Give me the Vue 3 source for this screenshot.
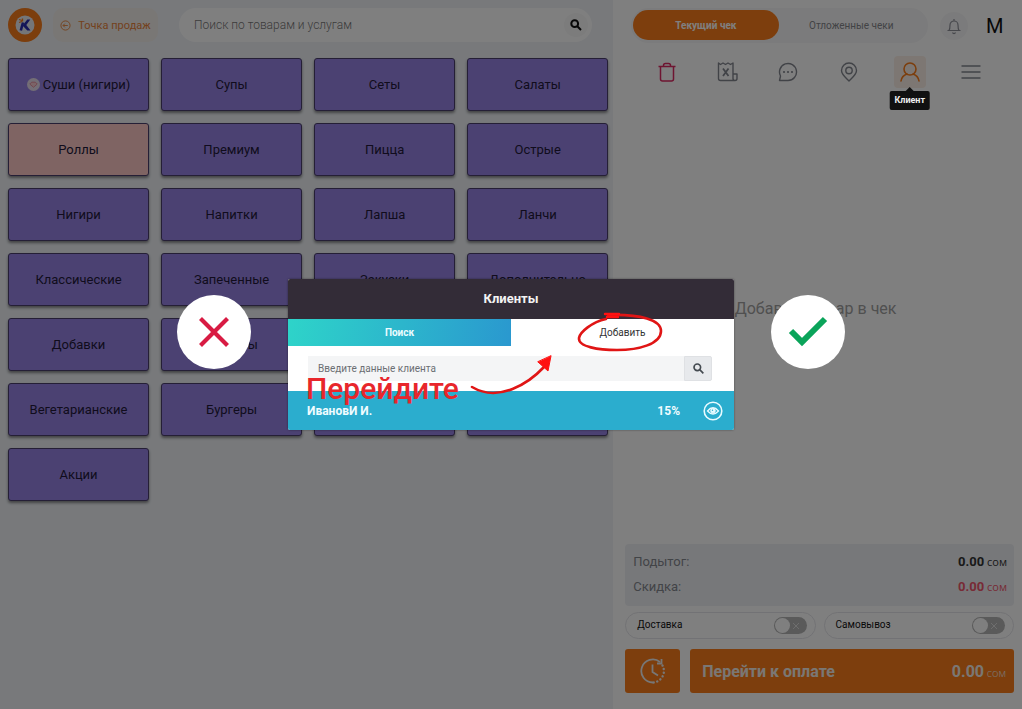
<script setup>
import { ref } from 'vue'

const categories = [
  'Суши (нигири)', 'Супы', 'Сеты', 'Салаты',
  'Роллы', 'Премиум', 'Пицца', 'Острые',
  'Нигири', 'Напитки', 'Лапша', 'Ланчи',
  'Классические', 'Запеченные', 'Закуски', 'Дополнительно',
  'Добавки', 'Гарниры', 'Десерты', 'Детское',
  'Вегетарианские', 'Бургеры', 'Блины', 'Бизнес',
  'Акции',
]
const query = ref('')
const client = ref('')
const delivery = ref(false)
const pickup = ref(false)
</script>

<template>
  <div class="page">
    <main class="catalog">
      <header class="topbar">
        <a class="logo" href="#" aria-label="Главная">
          <svg viewBox="0 0 34 34" width="34" height="34">
            <circle cx="17" cy="17" r="17" fill="#f87c1b" />
            <circle cx="17" cy="17" r="9.500" fill="#e9ecf2" />
            <path d="M15 14.500 12.800 22.500" fill="none" stroke="#2a2bb0" stroke-width="2.600" />
            <path d="M22.300 11.500h-3L14.500 17.500l4.800 5h3.200l-4.200-5.500z" fill="#2a2bb0" />
            <path d="M11 11.500l3 1M11 14.500l3-1M14.500 10.500v3" stroke="#f87c1b" stroke-width="1.300" />
          </svg>
        </a>
        <button class="point" type="button">
          <svg viewBox="0 0 12 12" width="11" height="11" fill="none" stroke="currentColor">
            <circle cx="6" cy="6" r="5" />
            <path d="M8.500 6h-5M5.300 4 3.300 6l2 2" />
          </svg>
          Точка продаж
        </button>
        <form class="search" @submit.prevent>
          <input v-model="query" type="text" placeholder="Поиск по товарам и услугам" aria-label="Поиск по товарам и услугам">
          <button type="submit" aria-label="Найти">
            <svg viewBox="0 0 12 12" width="12" height="12" fill="none" stroke="#111" stroke-width="2">
              <circle cx="4.700" cy="4.700" r="3.400" />
              <path d="M7.300 7.300 11 11" />
            </svg>
          </button>
        </form>
      </header>
      <div class="grid">
        <button v-for="(name, i) in categories" :key="name" type="button" class="tile" :class="{ picked: name === 'Роллы' }">
          <svg v-if="i === 0" viewBox="0 0 14 14" width="13" height="13">
            <circle cx="7" cy="7" r="7" fill="#e6dcec" />
            <path d="M3 6.500 5 4.500h4l2 2-4 3.500z" fill="#f6c9cf" stroke="#e58a9b" />
          </svg>
          {{ name }}
        </button>
      </div>
    </main>

    <aside class="receipt">
      <header class="receipt-top">
        <div class="tabs">
          <button type="button" class="on">Текущий чек</button>
          <button type="button">Отложенные чеки</button>
        </div>
        <button class="bell" type="button" aria-label="Уведомления">
          <svg viewBox="0 0 16 18" width="16" height="18" fill="none" stroke="#8e9099" stroke-width="1.200">
            <path d="M1.500 13.500h13M3 13.500c1-1.500 1-3 1-5.500a4 4 0 0 1 8 0c0 2.500 0 4 1 5.500M8 4V2M6.500 15.500a1.600 1.600 0 0 0 3 0" />
          </svg>
        </button>
        <span class="user">M</span>
      </header>

      <nav class="tools">
        <button type="button" aria-label="Удалить">
          <svg viewBox="0 0 20 20" width="20" height="20" fill="none" stroke="#dc2a63" stroke-width="1.500" stroke-linejoin="round">
            <path d="M1.500 4.500h17M3.500 4.500v12.500a2 2 0 0 0 2 2h9a2 2 0 0 0 2-2V4.500M6.500 4.500V3.500a2 2 0 0 1 2-2h3a2 2 0 0 1 2 2v1" />
          </svg>
        </button>
        <button type="button" aria-label="Отчёт">
          <svg viewBox="0 0 21 20" width="21" height="20" fill="none" stroke="#83868f" stroke-width="1.400" stroke-linejoin="round">
            <path d="M16 12V1l-2.500 1.500L11 1 8.500 2.500 6 1 3.500 2.500 1.500 1v15.500a2 2 0 0 0 2 2H18a2 2 0 0 0 2-2V12h-4v4.500a2 2 0 0 0 2 2" />
            <path d="m6 6.500 5.500 7.500M11.500 6.500 6 14" stroke-width="1.800" />
          </svg>
        </button>
        <button type="button" aria-label="Комментарий">
          <svg viewBox="0 0 20 20" width="20" height="20" fill="none" stroke="#83868f" stroke-width="1.400">
            <path d="M1.500 18.500l1-4.500A8.500 8.500 0 1 1 10 18.500z" stroke-linejoin="round" />
            <g fill="#83868f" stroke="none"><circle cx="6" cy="10" r="1.100" /><circle cx="10" cy="10" r="1.100" /><circle cx="14" cy="10" r="1.100" /></g>
          </svg>
        </button>
        <button type="button" aria-label="Адрес">
          <svg viewBox="0 0 18 20" width="18" height="20" fill="none" stroke="#83868f" stroke-width="1.400">
            <path d="M9 19C5.500 15.500 1.500 12.500 1.500 8.500a7.500 7.500 0 0 1 15 0C16.500 12.500 12.500 15.500 9 19z" stroke-linejoin="round" />
            <circle cx="9" cy="8.500" r="3.200" />
          </svg>
        </button>
        <button type="button" class="client" aria-label="Клиент">
          <svg viewBox="0 0 20 20" width="20" height="20" fill="none" stroke="#f87c1b" stroke-width="1.600">
            <circle cx="10" cy="7" r="6" />
            <path d="M1 19c.5-3.500 3-6 6-7M19 19c-.5-3.500-3-6-6-7" stroke-linecap="round" />
          </svg>
          <span class="tip">Клиент</span>
        </button>
        <button type="button" aria-label="Меню">
          <svg viewBox="0 0 20 14" width="20" height="14" stroke="#83868f" stroke-width="1.400" stroke-linecap="round">
            <path d="M1 1h18M1 7h18M1 13h18" />
          </svg>
        </button>
      </nav>

      <p class="empty">Добавьте товар в чек</p>

      <dl class="totals">
        <div><dt>Подытог:</dt><dd><b>0.00</b> сом</dd></div>
        <div class="discount"><dt>Скидка:</dt><dd><b>0.00</b> сом</dd></div>
      </dl>
      <div class="switches">
        <label>Доставка <input v-model="delivery" type="checkbox"><span class="switch"><svg viewBox="0 0 8 8" width="8" height="8" stroke="#ddd"><path d="m1 1 6 6M7 1 1 7" /></svg></span></label>
        <label>Самовывоз <input v-model="pickup" type="checkbox"><span class="switch"><svg viewBox="0 0 8 8" width="8" height="8" stroke="#ddd"><path d="m1 1 6 6M7 1 1 7" /></svg></span></label>
      </div>
      <div class="actions">
        <button type="button" class="later" aria-label="Отложить">
          <svg viewBox="0 0 26 26" width="26" height="26" fill="none" stroke="#eee" stroke-width="1.800">
            <path d="M13 24.500A11.500 11.500 0 1 1 20 4" />
            <path d="M17 5.500h4.500V1" />
            <path d="M12.500 6.500V14l5.500 3.500" />
            <path d="M22.500 7.500A11.500 11.500 0 0 1 13 24.500" stroke-dasharray="0.1 3.600" stroke-linecap="round" stroke-width="2.400" />
          </svg>
        </button>
        <button type="button" class="pay"><span>Перейти к оплате</span><span class="sum"><b>0.00</b> сом</span></button>
      </div>
    </aside>

    <div class="overlay">
      <div class="scene">
        <span class="mark">
          <svg viewBox="0 0 30 30" width="30" height="30" stroke="#d81b43" stroke-width="4.200"><path d="m1.500 1.500 27 27M28.500 1.500l-27 27" /></svg>
        </span>
        <section class="modal" role="dialog" aria-label="Клиенты">
          <h2>Клиенты</h2>
          <div class="modal-tabs">
            <button type="button" class="on">Поиск</button>
            <button type="button">Добавить</button>
          </div>
          <form class="find" @submit.prevent>
            <input v-model="client" type="text" placeholder="Введите данные клиента" aria-label="Введите данные клиента">
            <button type="submit" aria-label="Найти">
              <svg viewBox="0 0 12 12" width="11" height="11" fill="none" stroke="#444a50" stroke-width="1.800">
                <circle cx="4.700" cy="4.700" r="3.600" />
                <path d="M7.300 7.300 11.300 11.300" />
              </svg>
            </button>
          </form>
          <div class="row">
            <b>ИвановИ И.</b>
            <b class="pct">15%</b>
            <button type="button" aria-label="Просмотр">
              <svg viewBox="0 0 20 20" width="20" height="20" fill="none" stroke="#e8fbff">
                <circle cx="10" cy="10" r="8.800" stroke-width="1.600" />
                <path d="M4.500 10Q10 3.500 15.500 10 10 16 4.500 10z" stroke-width="1.300" />
                <circle cx="10" cy="9.800" r="2.300" fill="#e8fbff" />
                <circle cx="9.500" cy="9.300" r=".7" fill="#2aaccd" stroke="none" />
              </svg>
            </button>
          </div>
          <span class="note">Перейдите</span>
          <svg class="ink" viewBox="0 0 446 151" fill="none" stroke="#e01515" stroke-width="2.600" stroke-linecap="round">
            <path d="M318 40c-14 3-26 13-27 19-1 9 20 12 38 12 22 0 44-6 44-19 0-11-20-17-53-16" />
            <path d="M317 35h14M319 38h11" stroke="#f11" stroke-width="2.400" />
            <path d="M184 108c27 16 57-4 72-20" />
            <path d="m263 77-3 15-10-9z" fill="#f11" stroke="#f11" stroke-width="1" stroke-linejoin="round" />
          </svg>
        </section>
        <span class="mark">
          <svg viewBox="0 0 40 32" width="40" height="32" fill="none" stroke="#0aa45a" stroke-width="6"><path d="m3 15 11 11L37 3" /></svg>
        </span>
      </div>
    </div>
  </div>
</template>

<style>
body { margin: 0; }
</style>

<style scoped>
* { box-sizing: border-box; }
.page { position: relative; display: grid; grid-template-columns: 3fr 2fr; min-height: 100vh; font-family: Roboto, "Liberation Sans", sans-serif; color: #111; background: #f0f3f7; }
button { font: inherit; color: inherit; border: 0; padding: 0; background: none; cursor: pointer; display: flex; align-items: center; justify-content: center; }
input { font: inherit; border: 0; outline: 0; min-width: 0; background: none; }
svg { display: block; flex: none; }
.catalog { padding: 8px 5px 0 8px; }
.topbar { display: flex; align-items: center; height: 34px; margin-bottom: 16px; }
.logo { margin-right: 11px; }
.point { height: 34px; width: 105px; gap: 7px; border-radius: 10px; background: #f3eeea; color: #e8833a; font-size: 11px; }
.search { flex: 1; display: flex; align-items: center; height: 34px; margin: 0 16px 0 21px; padding: 0 4px 0 15px; border-radius: 17px; background: #fff; }
.search input { flex: 1; padding: 0; font-size: 12px; font-weight: 300; }
.search input::placeholder { color: #777; opacity: 1; }
.search button { width: 24px; height: 24px; border-radius: 12px; background: #f8f8f8; }
.grid { display: grid; grid-template-columns: repeat(4, 1fr); gap: 12px; }
.tile { height: 53px; gap: 3px; border: 1px solid #4a3f6c; border-radius: 3px; background: #9783e4; color: #22193a; font-size: 13px; box-shadow: 0 2px 3px rgba(0, 0, 0, .45); }
.tile.picked { background: #ffc8c6; }

.receipt { display: flex; flex-direction: column; padding: 8px 8px 16px 12px; background: #fff; }
.receipt-top { display: flex; align-items: center; height: 35px; }
.tabs { flex: 1; display: grid; grid-template-columns: 1fr 1fr; margin-left: 6px; padding: 2px 4px 3px 2px; height: 35px; border-radius: 18px; background: #f7f7f8; font-size: 10px; color: #85868b; }
.tabs button { border-radius: 16px; }
.tabs .on { background: #fb7d1a; color: #fff; font-weight: 700; }
.bell { width: 28px; height: 28px; margin: 0 18px 0 12px; border-radius: 14px; background: #f7f7f8; }
.user { width: 18px; margin-right: 10px; font-size: 20px; }
.tools { display: grid; grid-template-columns: repeat(6, 1fr); justify-items: center; margin-top: 13px; padding: 0 13px 0 11px; }
.tools button { width: 32px; height: 32px; border-radius: 4px; }
.tools .client { position: relative; background: #fbefe6; }
.tip { position: absolute; z-index: 6; top: 35px; left: 50%; transform: translateX(-50%); padding: 0 5px; border-radius: 2px; background: #111; color: #eee; font-size: 9px; font-weight: 700; line-height: 19px; }
.tip::before { content: ""; position: absolute; left: 50%; top: -4px; margin-left: -4px; border: solid transparent; border-width: 0 4px 4px; border-bottom-color: #111; }
.empty { flex: 1; display: flex; align-items: center; justify-content: center; margin: 0; padding: 0 8px 16px 0; font-size: 16px; color: #a0a0a0; }
.totals { margin: 0 0 6px; padding: 5px 7px 7px 8px; border-radius: 4px; background: #eff1f5; font-size: 13px; }
.totals div { display: flex; justify-content: space-between; align-items: center; height: 25px; }
.totals dt { color: #85888f; }
.totals dd { margin: 0; font-family: "Open Sans", sans-serif; font-size: 11px; color: #333; }
.totals b { font-family: Roboto, sans-serif; font-size: 13px; }
.totals .discount dd { color: #f0566c; }
.switches { display: grid; grid-template-columns: 1fr 1fr; gap: 8px; margin-bottom: 10px; }
.switches label { position: relative; display: flex; align-items: center; justify-content: space-between; height: 27px; padding: 0 8px 2px 11px; border: 1px solid #e5e5ea; border-radius: 14px; font-size: 10px; }
.switches input { position: absolute; opacity: 0; }
.switch { display: flex; align-items: center; justify-content: space-between; flex-direction: row-reverse; width: 33px; height: 17px; margin-top: 2px; padding: 0 7px 0 1px; border-radius: 9px; background: #b4b4b4; }
.switch::after { content: ""; width: 15px; height: 15px; border-radius: 8px; background: #fff; }
.actions { display: flex; gap: 10px; height: 44px; color: #f4efe9; }
.actions button { border-radius: 3px; background: #fb7d1a; }
.later { width: 55px; }
.actions .pay { flex: 1; justify-content: space-between; padding: 0 8px 0 12px; font-size: 16px; font-weight: 700; }
.sum { font-family: "Open Sans", sans-serif; font-size: 11px; font-weight: 300; }
.sum b { font-family: Roboto, sans-serif; font-size: 16px; font-weight: 700; }

.overlay { position: absolute; z-index: 5; inset: 0; display: flex; align-items: center; justify-content: center; background: rgba(0, 0, 0, .5); }
.scene { display: flex; align-items: flex-start; gap: 37px; }
.mark { display: flex; align-items: center; justify-content: center; width: 74px; height: 74px; margin-top: 16px; border-radius: 50%; background: #fff; }
.modal { position: relative; width: 446px; border-radius: 2px; background: #fff; box-shadow: 0 0 2px rgba(0, 0, 0, .5); overflow: hidden; }
.modal h2 { margin: 0; background: #332c37; color: #f3f3f3; font-size: 13px; font-weight: 700; line-height: 40px; text-align: center; }
.modal-tabs { display: grid; grid-template-columns: 1fr 1fr; height: 27px; font-size: 10px; color: #333; }
.modal-tabs .on { background: linear-gradient(100deg, #2ed4c9, #2a98cf); color: #eafcff; font-weight: 700; }
.find { display: flex; height: 45px; padding: 10px 22px 10px 20px; }
.find input { flex: 1; padding: 0 10px; background: #f4f5f6; font-size: 10px; }
.find input::placeholder { color: #6b6f73; opacity: 1; }
.find button { width: 28px; background: #e7e9ec; border: 1px solid #dfe1e4; border-radius: 0 2px 2px 0; }
.row { display: flex; align-items: center; height: 39px; padding: 0 11px 0 19px; background: #2badce; color: #f0fcff; font-size: 12px; }
.pct { margin: 0 23px 0 auto; }
.note { position: absolute; left: 18px; top: 90px; font-size: 30px; font-weight: 500; line-height: 40px; color: #e8262b; }
.ink { position: absolute; inset: 0; width: 100%; height: 100%; pointer-events: none; }
</style>
